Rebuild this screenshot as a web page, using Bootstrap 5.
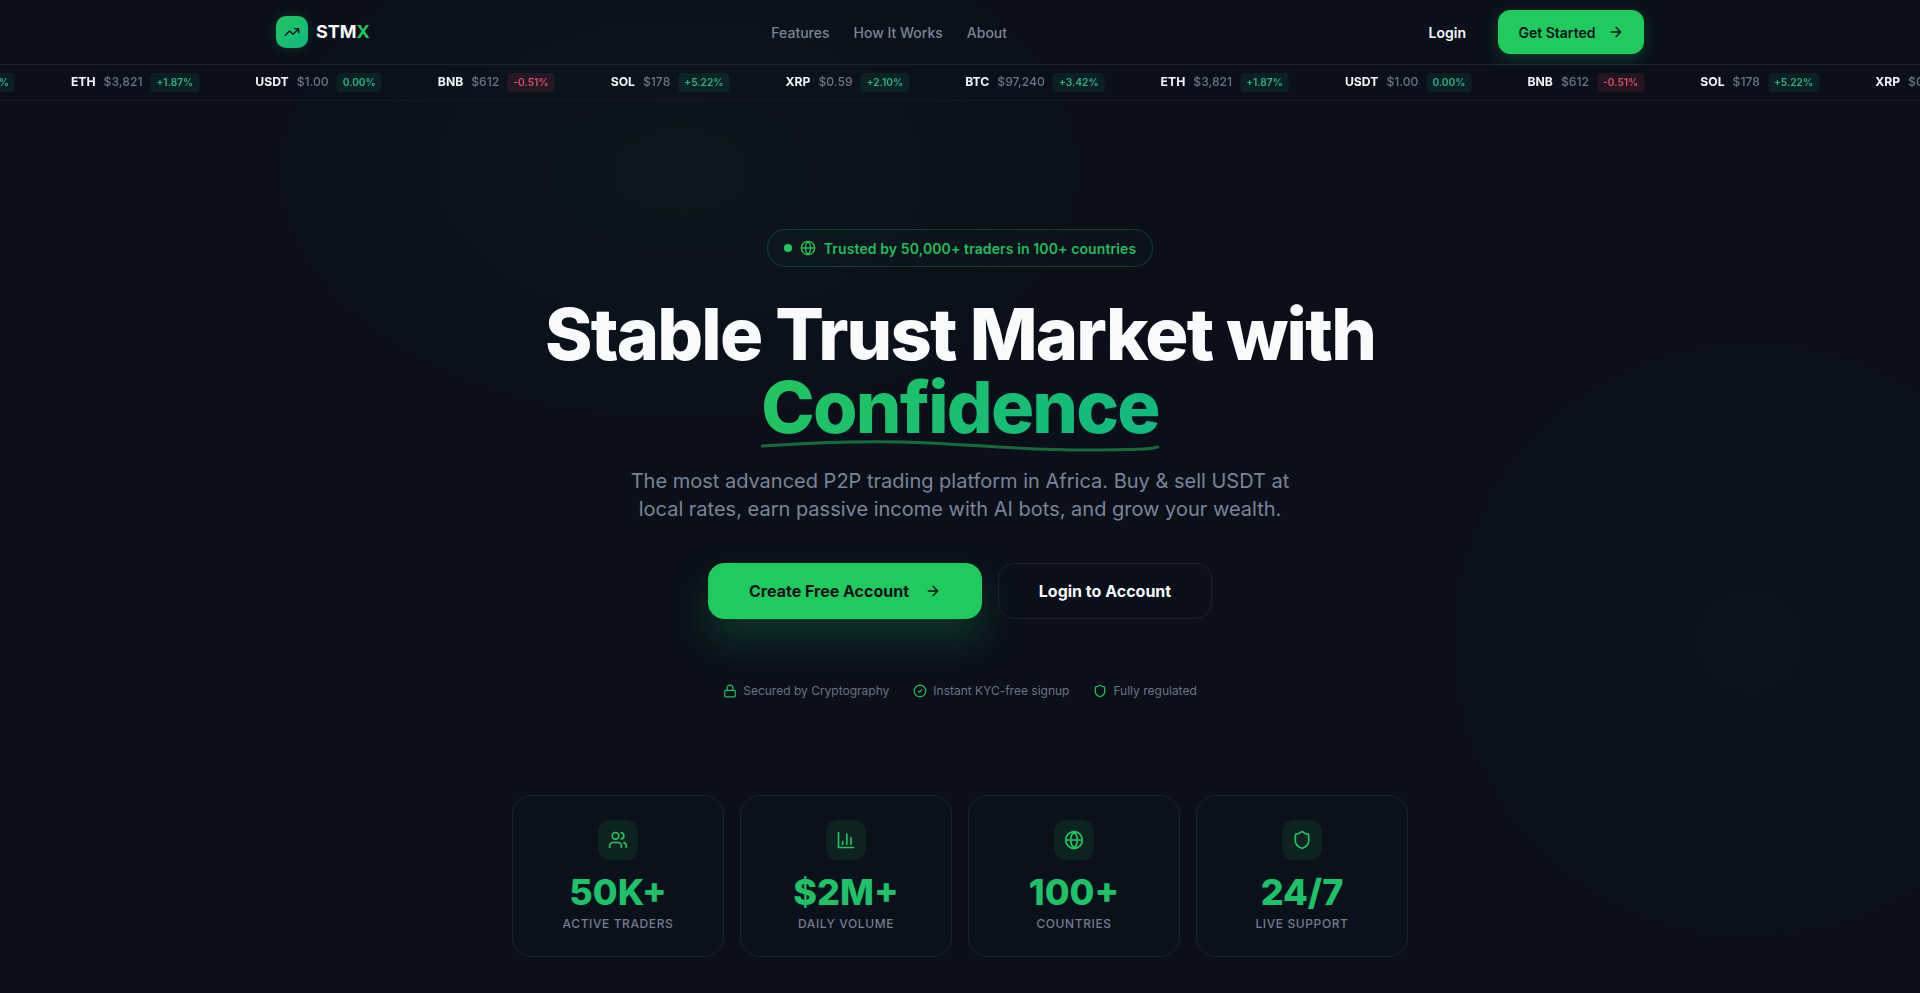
<!DOCTYPE html>
<html lang="en">
<head>
  <meta charset="UTF-8" />
  <meta name="viewport" content="width=device-width, initial-scale=1" />
  <title>STMX - Stable Trust Market</title>
  <link href="https://cdn.jsdelivr.net/npm/bootstrap@5.3.0/dist/css/bootstrap.min.css" rel="stylesheet" />
  <style>
    body {
      font-family: Inter, "Liberation Sans", sans-serif;
      color: #f8fafc;
      min-height: 993px;
      overflow-x: hidden;
      background-color: #0a0f1a;
      background-image:
        radial-gradient(circle 330px at 1750px 640px, rgba(34, 197, 94, .02), transparent 100%),
        radial-gradient(ellipse 420px 260px at 680px 170px, rgba(34, 197, 94, .04), transparent 100%);
      background-repeat: no-repeat;
    }
    .icon-line { fill: none; stroke: currentColor; stroke-width: 2; stroke-linecap: round; stroke-linejoin: round; }

    /* nav */
    .top-bar { height: 64px; }
    .top-wrap { max-width: 1400px; padding: 0 16px; }
    .logo-box {
      width: 32px; height: 32px; border-radius: 10px; color: #0a0f1a;
      background: linear-gradient(135deg, #22c55e, #10b981);
      box-shadow: 0 0 12px rgba(34, 197, 94, .2);
    }
    .logo-text { font-size: 18px; font-weight: 700; color: #f8fafc; line-height: 28px; }
    .logo-text span { color: #22c55e; }
    .menu-link { font-size: 14px; font-weight: 500; color: #7b8497; text-decoration: none; }
    .btn-login-top { font-size: 14px; font-weight: 600; color: #f8fafc; padding: 0 20px; height: 44px; border: 0; }
    .btn-start {
      --bs-btn-color: #0a0f1a; --bs-btn-hover-color: #0a0f1a;
      --bs-btn-bg: #1fcb5c; --bs-btn-hover-bg: #1fcb5c; --bs-btn-border-color: #1fcb5c;
      font-size: 14px; font-weight: 600; height: 44px; width: 146px; border-radius: 12px; margin-left: 12px;
      box-shadow: 0 4px 16px rgba(34, 197, 94, .25);
    }

    /* ticker */
    .ticker-strip { height: 37px; border-top: 1px solid #1c222e; border-bottom: 1px solid #141a25; overflow: hidden; }
    .ticker-row { gap: 56px; width: max-content; height: 35px; will-change: transform; transform: translateX(-124.5px); }
    .tick-name { font-size: 12.2px; font-weight: 700; color: #f1f5f9; }
    .tick-price { font-size: 12.2px; font-weight: 500; color: #6b7386; }
    .tick-change { font-size: 10.2px; font-weight: 600; line-height: 19px; padding: 0 6px; border-radius: 4px; }
    .tick-up { color: #2bb584; background: rgba(16, 185, 129, .1); }
    .tick-down { color: #d9506a; background: rgba(239, 68, 100, .12); }

    /* hero */
    .hero-area { padding-top: 128px; }
    .trust-pill {
      height: 38px; padding: 0 16px; border-radius: 19px; font-size: 14px; font-weight: 600; letter-spacing: .11px; color: #22bd5c;
      border: 1px solid rgba(34, 197, 94, .25); background: rgba(34, 197, 94, .02);
    }
    .trust-dot { width: 8px; height: 8px; border-radius: 50%; background: #22c55e; }
    .hero-title { font-size: 72px; font-weight: 800; line-height: 73px; letter-spacing: -1.8px; color: #f8fafc; margin: 30px 0 0; }
    .hero-accent {
      position: relative; display: inline-block;
      background: linear-gradient(135deg, #22c55e, #10b981);
      -webkit-background-clip: text; background-clip: text; color: transparent;
    }
    .accent-wave { position: absolute; left: 0; bottom: -9px; width: 100%; height: 12px; }
    .hero-text { font-size: 20px; line-height: 28px; color: #7b8497; margin: 24px auto 0; max-width: 672px; }
    .hero-actions { margin-top: 40px; }
    .hero-btn { height: 56px; border-radius: 16px; font-size: 16px; font-weight: 700; }
    .btn-create {
      --bs-btn-color: #0a0f1a; --bs-btn-hover-color: #0a0f1a;
      --bs-btn-bg: #1fcb5c; --bs-btn-hover-bg: #1fcb5c; --bs-btn-border-color: #1fcb5c;
      width: 274px; box-shadow: 0 20px 40px rgba(34, 197, 94, .22);
    }
    .btn-account {
      --bs-btn-color: #f8fafc; --bs-btn-hover-color: #f8fafc;
      --bs-btn-bg: transparent; --bs-btn-border-color: #1a202c;
      width: 214px;
    }
    .assure-row { font-size: 12px; color: #6b7386; margin-top: 64px; gap: 24px; line-height: 16px; }
    .assure-row > span { gap: 6px; }
    .assure-row svg { color: #22c55e; }

    /* stats */
    .stat-wrap { max-width: 896px; margin-top: 96px; }
    .stat-box { height: 162px; border-radius: 20px; border-color: #1c222e; background: rgba(12, 18, 29, .6); padding-top: 24px; }
    .stat-icon { width: 40px; height: 40px; border-radius: 12px; background: rgba(34, 197, 94, .1); color: #22c55e; }
    .stat-num { font-size: 36px; font-weight: 800; line-height: 40px; color: #1ec269; margin-top: 12px; }
    .stat-label { font-size: 12px; font-weight: 500; letter-spacing: .6px; color: #737c92; line-height: 16px; margin-top: 4px; text-transform: uppercase; }
  </style>
</head>
<body>

  <svg width="0" height="0" class="d-block position-absolute">
    <symbol id="i-arrow" viewBox="0 0 24 24"><path class="icon-line" d="M5 12h14M12 5l7 7-7 7" /></symbol>
    <symbol id="i-trend" viewBox="0 0 24 24"><path class="icon-line" d="M22 7l-8.5 8.5-5-5L2 17M16 7h6v6" /></symbol>
    <symbol id="i-globe" viewBox="0 0 24 24"><circle class="icon-line" cx="12" cy="12" r="10" /><path class="icon-line" d="M12 2a14.5 14.5 0 0 0 0 20 14.5 14.5 0 0 0 0-20M2 12h20" /></symbol>
    <symbol id="i-lock" viewBox="0 0 24 24"><rect class="icon-line" x="3" y="11" width="18" height="11" rx="2" /><path class="icon-line" d="M7 11V7a5 5 0 0 1 10 0v4" /></symbol>
    <symbol id="i-check" viewBox="0 0 24 24"><circle class="icon-line" cx="12" cy="12" r="10" /><path class="icon-line" d="m9 12 2 2 4-4" /></symbol>
    <symbol id="i-shield" viewBox="0 0 24 24"><path class="icon-line" d="M20 13c0 5-3.5 7.5-7.66 8.95a1 1 0 0 1-.67-.01C7.5 20.5 4 18 4 13V6a1 1 0 0 1 1-1c2 0 4.5-1.2 6.24-2.72a1.17 1.17 0 0 1 1.52 0C14.51 3.81 17 5 19 5a1 1 0 0 1 1 1z" /></symbol>
    <symbol id="i-users" viewBox="0 0 24 24"><path class="icon-line" d="M16 21v-2a4 4 0 0 0-4-4H6a4 4 0 0 0-4 4v2M22 21v-2a4 4 0 0 0-3-3.87M16 3.13a4 4 0 0 1 0 7.75" /><circle class="icon-line" cx="9" cy="7" r="4" /></symbol>
    <symbol id="i-chart" viewBox="0 0 24 24"><path class="icon-line" d="M3 3v18h18M18 17V9M13 17V5M8 17v-3" /></symbol>
  </svg>

  <!-- Navbar -->
  <nav class="top-bar">
    <div class="top-wrap mx-auto h-100 d-flex align-items-center justify-content-between">
      <a href="#" class="d-flex align-items-center gap-2 text-decoration-none">
        <span class="logo-box d-flex align-items-center justify-content-center">
          <svg width="16" height="16"><use href="#i-trend" /></svg>
        </span>
        <span class="logo-text">STM<span>X</span></span>
      </a>
      <div class="d-flex gap-4">
        <a href="#" class="menu-link">Features</a>
        <a href="#" class="menu-link">How It Works</a>
        <a href="#" class="menu-link">About</a>
      </div>
      <div class="d-flex align-items-center">
        <button class="btn btn-login-top">Login</button>
        <button class="btn btn-start d-flex align-items-center justify-content-center gap-2">
          Get Started
          <svg width="16" height="16" class="ms-1"><use href="#i-arrow" /></svg>
        </button>
      </div>
    </div>
  </nav>

  <!-- Ticker -->
  <div class="ticker-strip">
    <div class="ticker-row d-flex align-items-center" id="ticker"></div>
  </div>

  <!-- Hero -->
  <section class="hero-area text-center">
    <div class="trust-pill d-inline-flex align-items-center">
      <span class="trust-dot me-2"></span>
      <svg width="16" height="16" class="me-2"><use href="#i-globe" /></svg>
      Trusted by 50,000+ traders in 100+ countries
    </div>

    <h1 class="hero-title">
      Stable Trust Market with<br />
      <span class="hero-accent">Confidence<svg class="accent-wave" viewBox="0 0 400 12" preserveAspectRatio="none">
          <path d="M1 6C60 2 110 0 170 3S280 11 340 10 390 9 399 7" fill="none" stroke="#22c55e" stroke-opacity=".5" stroke-width="3" stroke-linecap="round" />
        </svg></span>
    </h1>

    <p class="hero-text">The most advanced P2P trading platform in Africa. Buy &amp; sell USDT at local rates, earn passive income with AI bots, and grow your wealth.</p>

    <div class="hero-actions d-flex justify-content-center gap-3">
      <button class="btn btn-create hero-btn d-flex align-items-center justify-content-center gap-3">
        Create Free Account
        <svg width="16" height="16"><use href="#i-arrow" /></svg>
      </button>
      <button class="btn btn-account hero-btn">Login to Account</button>
    </div>

    <div class="assure-row d-flex justify-content-center">
      <span class="d-flex align-items-center"><svg width="14" height="14"><use href="#i-lock" /></svg>Secured by Cryptography</span>
      <span class="d-flex align-items-center"><svg width="14" height="14"><use href="#i-check" /></svg>Instant KYC-free signup</span>
      <span class="d-flex align-items-center"><svg width="14" height="14"><use href="#i-shield" /></svg>Fully regulated</span>
    </div>

    <!-- Stats -->
    <div class="stat-wrap mx-auto">
      <div class="row g-3" id="stats"></div>
    </div>
  </section>

  <script>
    const coins = [
      ["BTC", "$97,240", "+3.42%"],
      ["ETH", "$3,821", "+1.87%"],
      ["USDT", "$1.00", "0.00%"],
      ["BNB", "$612", "-0.51%"],
      ["SOL", "$178", "+5.22%"],
      ["XRP", "$0.59", "+2.10%"]
    ];

    const stats = [
      ["i-users", "50K+", "Active Traders"],
      ["i-chart", "$2M+", "Daily Volume"],
      ["i-globe", "100+", "Countries"],
      ["i-shield", "24/7", "Live Support"]
    ];

    // two and a bit runs so the strip is filled past the right edge
    document.getElementById("ticker").innerHTML = [...coins, ...coins, ...coins].map(c => `
      <div class="d-flex align-items-center gap-2">
        <span class="tick-name">${c[0]}</span>
        <span class="tick-price">${c[1]}</span>
        <span class="tick-change ${c[2].startsWith("-") ? "tick-down" : "tick-up"}">${c[2]}</span>
      </div>`).join("");

    document.getElementById("stats").innerHTML = stats.map(s => `
      <div class="col-3">
        <div class="card stat-box align-items-center">
          <div class="stat-icon d-flex align-items-center justify-content-center">
            <svg width="20" height="20"><use href="#${s[0]}" /></svg>
          </div>
          <div class="stat-num">${s[1]}</div>
          <div class="stat-label">${s[2]}</div>
        </div>
      </div>`).join("");
  </script>

  <script src="https://cdn.jsdelivr.net/npm/bootstrap@5.3.0/dist/js/bootstrap.bundle.min.js"></script>
</body>
</html>
